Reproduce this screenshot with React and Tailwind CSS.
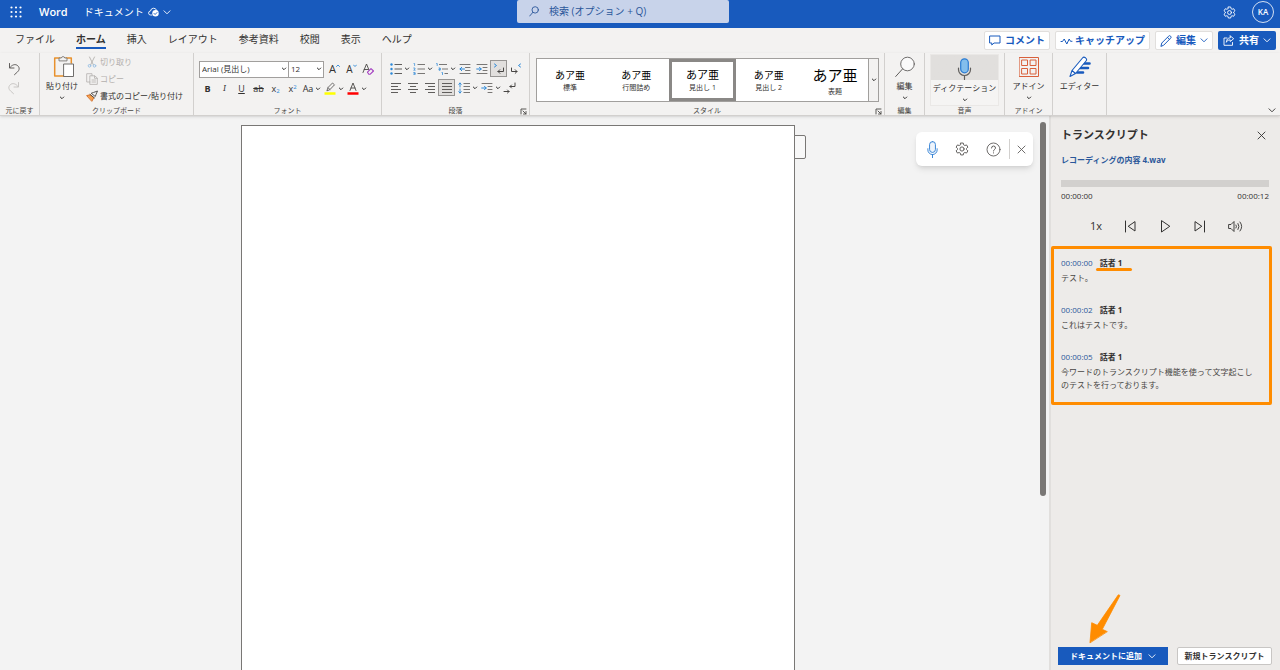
import React from "react";
import clsx from "clsx";

const tabs = ["ファイル", "ホーム", "挿入", "レイアウト", "参考資料", "校閲", "表示", "ヘルプ"];

const styles = [
  { name: "標準", size: "text-[10px] leading-4" },
  { name: "行間詰め", size: "text-[10px] leading-4" },
  { name: "見出し 1", size: "text-[11px] leading-4", selected: true },
  { name: "見出し 2", size: "text-[10px] leading-4" },
  { name: "表題", size: "text-[15px] leading-6" },
];

const entries = [
  { time: "00:00:00", speaker: "話者 1", text: "テスト。", marked: true },
  { time: "00:00:02", speaker: "話者 1", text: "これはテストです。" },
  {
    time: "00:00:05",
    speaker: "話者 1",
    text: "今ワードのトランスクリプト機能を使って文字起こしのテストを行っております。",
  },
];

const Svg = ({ w = 12, h = w, box = `0 0 ${w} ${h}`, children, className }) => (
  <svg
    width={w}
    height={h}
    viewBox={box}
    fill="none"
    stroke="currentColor"
    strokeLinecap="round"
    strokeLinejoin="round"
    className={clsx("shrink-0", className)}
    aria-hidden="true"
  >
    {children}
  </svg>
);

const Chevron = ({ className }) => (
  <Svg w={6} h={4} className={className}>
    <path d="M1.3 1L3 2.7 4.7 1" strokeWidth="1" />
  </Svg>
);

const WideChevron = ({ className }) => (
  <Svg w={8} h={5} className={className}>
    <path d="M1 .8L4 3.8 7 .8" strokeWidth=".9" />
  </Svg>
);

const Mic = ({ w, h, fill = "none", body = "#2b7cd3", stand = body }) => (
  <Svg w={w} h={h} box="0 0 14 22">
    <path d="M1 10v1.5a6 6 0 0012 0V10M7 17.5V21.5" stroke={stand} strokeWidth="1.2" />
    <rect x="3.2" y=".8" width="7.6" height="14" rx="3.8" fill={fill} stroke={body} strokeWidth="1.2" />
  </Svg>
);

const Gear = ({ size }) => (
  <Svg w={size} box="0 0 20 20">
    <path
      d="M8.2 1.5h3.6l.6 2.6 1.6.9 2.5-.8 1.9 3.2-2 1.8v1.6l2 1.8-1.9 3.2-2.5-.8-1.6.9-.6 2.6H8.2l-.6-2.6-1.6-.9-2.5.8-1.9-3.2 2-1.8V9.2l-2-1.8 1.9-3.2 2.5.8 1.6-.9z"
      strokeWidth="1.4"
    />
    <circle cx="10" cy="10" r="3" strokeWidth="1.4" />
  </Svg>
);

const Close = ({ size = 9 }) => (
  <Svg w={size} box="0 0 9 9">
    <path d="M1 1l7 7M8 1L1 8" strokeWidth=".9" />
  </Svg>
);

const Pencil = () => (
  <Svg w={12}>
    <path d="M1 11l.8-3L8.6 1.2a1.3 1.3 0 012 0 1.3 1.3 0 010 2L3.9 10zM7.5 2.4l2 2" strokeWidth="1" />
  </Svg>
);

const Lines = ({ rows }) => (
  <Svg w={12}>
    {rows.map(([x1, x2], i) => (
      <path key={i} d={`M${x1} ${1.5 + i * 3}H${x2}`} stroke="#605e5c" strokeLinecap="butt" />
    ))}
  </Svg>
);

const Launcher = () => (
  <button aria-label="オプションを表示" className="absolute right-0.5 bottom-0 text-[#484644]">
    <Svg w={7}>
      <path d="M1 6V1h5M3 3l3 3M6 3.5V6H3.5" strokeWidth=".9" />
    </Svg>
  </button>
);

const Group = ({ label, launcher, className, children }) => (
  <section className={clsx("relative flex shrink-0 flex-col border-r border-[#d2d0ce]", className)}>
    <div className="flex flex-1">{children}</div>
    <span className="h-2 text-center text-[7px] leading-2 text-[#484644]">{label}</span>
    {launcher && <Launcher />}
  </section>
);

const Tool = ({ label, menu, on, wide, children }) => (
  <button aria-label={label} className="flex items-center">
    <span
      className={clsx(
        "flex h-[17px] items-center justify-center",
        wide ? "w-3.5" : "w-[17px]",
        on && "border border-[#979593] bg-[#e1dfdd]"
      )}
    >
      {children}
    </span>
    {menu && <Chevron />}
  </button>
);

const BigButton = ({ label, menu, children, className }) => (
  <button className={clsx("flex flex-col items-center", className)}>
    <span className="flex h-[27px] w-full items-center justify-center">{children}</span>
    <span className="h-3 leading-3 whitespace-nowrap">{label}</span>
    {menu && <Chevron className="mt-1" />}
  </button>
);

const TitleBar = () => (
  <header className="flex h-7 shrink-0 items-center bg-[#185abd] text-white">
    <div className="flex flex-1 items-center pb-1">
      <button aria-label="アプリ起動ツール" className="ml-2.5">
        <svg width="12" height="12" viewBox="0 0 12 12" fill="currentColor">
          {[1.5, 6, 10.5].map((y) => [1.5, 6, 10.5].map((x) => <circle key={`${x}-${y}`} cx={x} cy={y} r="1.1" />))}
        </svg>
      </button>
      <span className="ml-[17px] text-[11px] font-semibold">Word</span>
      <span className="ml-4 text-[10px]">ドキュメント</span>
      <Svg w={11} h={10} className="ml-1">
        <path d="M4 8H2.7a2 2 0 01-.2-4 3.2 3.2 0 016.2-.6" strokeWidth=".9" />
        <circle cx="7.5" cy="6.3" r="3.2" fill="white" stroke="none" />
        <path d="M6 6.4l1.1 1.1L9 5.5" stroke="#185abd" strokeWidth=".9" />
      </Svg>
      <WideChevron className="ml-1" />
    </div>
    <label className="mr-7 flex h-[23px] w-[212px] items-center self-start rounded-xs bg-[#c8d3ea] pl-3 text-[#2b579a]">
      <Svg w={10} h={11}>
        <circle cx="6.2" cy="3.9" r="3.2" strokeWidth=".9" />
        <path d="M3.9 6.3L.7 10" strokeWidth=".9" />
      </Svg>
      <input
        aria-label="検索"
        placeholder="検索 (オプション + Q)"
        className="ml-2.5 w-40 bg-transparent text-[10px] outline-none placeholder:text-[#2b579a]"
      />
    </label>
    <div className="flex flex-1 items-center justify-end gap-4 pr-1.5 pb-1">
      <button aria-label="設定">
        <Gear size={13} />
      </button>
      <button className="flex size-[22px] items-center justify-center rounded-full border border-white/80 text-[8px] font-semibold">
        KA
      </button>
    </div>
  </header>
);

const pill = "flex h-[19px] items-center rounded-xs border border-[#e1dfdd] bg-white px-1 font-bold text-[#185abd]";

const TabRow = () => (
  <nav className="flex h-[25px] shrink-0 items-start justify-between pr-1 text-[10px]">
    <div className="flex items-start gap-[21px] pl-[15px]">
      {tabs.map((tab) => (
        <button
          key={tab}
          className={clsx(
            "h-[21px] border-b-2 pt-1",
            tab === "ホーム" ? "border-[#185abd] font-bold" : "border-transparent"
          )}
        >
          {tab}
        </button>
      ))}
    </div>
    <div className="flex gap-[5px] pt-[3px]">
      <button className={pill}>
        <Svg w={12} h={11} className="mr-1">
          <path d="M1 1h10v7H5L2.8 10V8H1z" strokeWidth="1" />
        </Svg>
        コメント
      </button>
      <button className={pill}>
        <Svg w={13} h={10} className="mr-0.5">
          <path d="M1 5.5h1.5L4.2 3l2.6 5 2.4-5 1.3 2.3H12" strokeWidth="1" />
        </Svg>
        キャッチアップ
      </button>
      <button className={clsx(pill, "gap-1")}>
        <Pencil />
        編集
        <WideChevron />
      </button>
      <button className="flex h-[19px] items-center gap-1 rounded-xs bg-[#185abd] px-[5px] font-bold text-white">
        <Svg w={12} h={11}>
          <path d="M4 3H1v7.3h8.5V7.5" strokeWidth=".9" />
          <path d="M7.2.9l3.5 2.8-3.5 2.8V4.9C5.2 4.9 4 5.7 3.3 7.3c.1-2.7 1.5-4.4 3.9-4.6z" strokeWidth=".9" />
        </Svg>
        共有
        <WideChevron />
      </button>
    </div>
  </nav>
);

const Ribbon = () => (
  <div className="relative z-10 flex h-[63px] shrink-0 border-b border-[#d2d0ce] text-[8px] shadow-sm">
    <Group label="元に戻す" className="w-10">
      <div className="flex flex-col gap-0.5 pt-[7px] pl-[5px]">
        <Tool label="元に戻す">
          <Svg w={12} h={14}>
            <path d="M1.5 1.5V6H6M1.7 5.8C4 2.5 7.5 1.7 9.7 3.7s1.7 4.5-.2 6.2L6.5 12.7" stroke="#605e5c" />
          </Svg>
        </Tool>
        <Tool label="やり直し">
          <Svg w={12} h={14}>
            <path d="M10.5 1.5V6H6M10.3 5.8C8 2.5 4.5 1.7 2.3 3.7s-1.7 4.5.2 6.2L5.5 12.7" stroke="#c8c6c4" />
          </Svg>
        </Tool>
      </div>
    </Group>

    <Group label="クリップボード" className="w-[154px]">
      <BigButton label="貼り付け" menu className="ml-1.5">
        <Svg w={22} h={24} className="ml-1">
          <path d="M7 3H1.7v18h9M13 3h5.3v5" stroke="#e8912d" strokeWidth="1.5" />
          <path d="M6 5.5V3h2.3a1.8 1.8 0 013.5 0H14v2.5z" fill="#f3f2f1" stroke="#797775" strokeWidth=".9" />
          <path d="M11 9h9.500v12.5H11z" fill="white" stroke="#605e5c" strokeWidth=".9" />
        </Svg>
      </BigButton>
      <div className="ml-2 flex flex-col gap-[5px] pt-[3px] whitespace-nowrap">
        <button className="flex h-3 items-center gap-0.5 text-[#b3b0ad]">
          <Svg w={12}>
            <path d="M3.5 1l4 8M8.5 1l-4 8" strokeWidth=".9" />
            <circle cx="3.5" cy="9.8" r="1.3" stroke="#9cc3e6" />
            <circle cx="8.5" cy="9.8" r="1.3" stroke="#9cc3e6" />
          </Svg>
          切り取り
        </button>
        <button className="flex h-3 items-center gap-0.5 text-[#b3b0ad]">
          <Svg w={12}>
            <path d="M4 9H.7V.7H6v1.8M4.2 2.8h4.5L11.3 5v6.4H4.2zM8.5 3v2.3H11M6 7h3.5M6 9h3.5" strokeWidth=".8" />
          </Svg>
          コピー
        </button>
        <button className="flex h-3 items-center gap-0.5">
          <Svg w={12}>
            <path d="M1 5.5l3.5-.8 3.3 3L6 11z" fill="#f7a04b" stroke="#d2691e" strokeWidth=".9" />
            <path d="M4 4.5L8.5 8M5.500 3.500l3.800 3 .7-2L11.500 1 8 2.300z" stroke="#484644" strokeWidth=".9" />
          </Svg>
          書式のコピー/貼り付け
        </button>
      </div>
    </Group>

    <Group label="フォント" className="w-[188px]">
      <div className="flex flex-col gap-0.5 pt-[7px] pl-[5px]">
        <div className="flex h-[18px] items-center">
          <div className="relative">
            <select
              aria-label="フォント名"
              className="block h-[17px] w-[90px] appearance-none border border-[#a19f9d] bg-white pl-0.5"
            >
              <option>Arial (見出し)</option>
            </select>
            <Chevron className="pointer-events-none absolute top-1.5 right-0.5" />
          </div>
          <div className="relative mr-0.5">
            <select
              aria-label="フォント サイズ"
              className="block h-[17px] w-[35px] appearance-none border border-l-0 border-[#a19f9d] bg-white pl-0.5"
            >
              <option>12</option>
            </select>
            <Chevron className="pointer-events-none absolute top-1.5 right-0.5" />
          </div>
          <Tool label="フォント サイズの拡大">
            <span className="text-[11px]">A</span>
            <Svg w={4} h={10}>
              <path d="M.5 2.5L2 1l1.5 1.5" stroke="#2b88d8" strokeWidth=".9" />
            </Svg>
          </Tool>
          <Tool label="フォント サイズの縮小">
            <span className="text-[10px]">A</span>
            <Svg w={4} h={10}>
              <path d="M.5 1L2 2.5 3.5 1" stroke="#2b88d8" strokeWidth=".9" />
            </Svg>
          </Tool>
          <Tool label="書式のクリア">
            <Svg w={13}>
              <path d="M1 9.5L4.5 1 7 7M2.2 6.5h4" stroke="#484644" strokeWidth=".9" />
              <path d="M5.5 9.2L9 5.7 11.5 8 8 11.3H6.8z" fill="#f3f2f1" stroke="#a33ec0" strokeWidth="1.1" />
            </Svg>
          </Tool>
        </div>
        <div className="flex items-center text-[9px]">
          <Tool label="太字"><b>B</b></Tool>
          <Tool label="斜体"><i className="font-serif">I</i></Tool>
          <Tool label="下線"><u>U</u></Tool>
          <Tool label="取り消し線"><s>ab</s></Tool>
          <Tool label="下付き">
            <span>x<sub className="text-[6px] text-[#2b88d8]">2</sub></span>
          </Tool>
          <Tool label="上付き">
            <span>x<sup className="text-[6px] text-[#2b88d8]">2</sup></span>
          </Tool>
          <Tool label="文字種の変換" menu wide>Aa</Tool>
          <Tool label="蛍光ペンの色" menu>
            <Svg w={12} h={13}>
              <path d="M3 8.5l1-3L8.5 1l2 1.8L6 7.5zM4 5.7l2 1.8" stroke="#605e5c" strokeWidth=".9" />
              <path d="M.5 11.5h11" stroke="#ffff00" strokeWidth="2.5" strokeLinecap="butt" />
            </Svg>
          </Tool>
          <Tool label="フォントの色" menu>
            <Svg w={12} h={13}>
              <path d="M3 8.5L6 1l3 7.5M4 6h4" stroke="#484644" strokeWidth=".9" />
              <path d="M.5 11.5h11" stroke="#ff0000" strokeWidth="2.5" strokeLinecap="butt" />
            </Svg>
          </Tool>
        </div>
      </div>
    </Group>

    <Group label="段落" launcher className="w-[148px]">
      <div className="flex flex-col gap-0.5 pt-[7px] pl-[5px]">
        <div className="flex">
          <Tool label="箇条書き" menu>
            <Svg w={12}>
              {[1.5, 6, 10.5].map((y) => (
                <g key={y}>
                  <circle cx="1.5" cy={y} r="1.2" fill="#2b88d8" stroke="none" />
                  <path d={`M4.5 ${y}H12`} stroke="#605e5c" strokeLinecap="butt" />
                </g>
              ))}
            </Svg>
          </Tool>
          <Tool label="段落番号" menu>
            <Svg w={12}>
              {[1.5, 6, 10.5].map((y) => (
                <path key={y} d={`M4.5 ${y}H12`} stroke="#797775" strokeLinecap="butt" />
              ))}
              <path d="M1 .5h.6v2M.7 5H2v1L.7 7.2h1.500M.7 9.5h1.400v2.200H.7M1 10.6h1" stroke="#2b88d8" strokeWidth=".7" />
            </Svg>
          </Tool>
          <Tool label="アウトライン" menu>
            <Svg w={12}>
              <path d="M3 1.5h8M6 6h6M8.5 10.5H12" stroke="#797775" strokeLinecap="butt" />
              <path d="M.7.5h.5v2M3 5h1.2v2.2H3V6h1.2M6 9.5h.5v2" stroke="#2b88d8" strokeWidth=".8" />
            </Svg>
          </Tool>
          <Tool label="インデントを減らす">
            <Svg w={12}>
              <path d="M1 1.5h10M6.5 4.5H11M6.5 7.5H11M1 10.5h10" stroke="#797775" />
              <path d="M5.5 6H1M2.7 4.3L1 6l1.7 1.7" stroke="#2b88d8" />
            </Svg>
          </Tool>
          <Tool label="インデントを増やす">
            <Svg w={12}>
              <path d="M1 1.5h10M7 4.5h4M7 7.5h4M1 10.5h10" stroke="#797775" />
              <path d="M.7 6h4.5M3.5 4.3L5.2 6 3.5 7.7" stroke="#2b88d8" />
            </Svg>
          </Tool>
          <Tool label="左から右" on>
            <Svg w={12}>
              <path d="M1.5 1l2 1.5-2 1.5" stroke="#2b88d8" />
              <path d="M10.5 5v3.5H5M6.8 6.7L5 8.5l1.8 1.8" stroke="#484644" />
            </Svg>
          </Tool>
          <Tool label="右から左">
            <Svg w={12}>
              <path d="M10.5 1l-2 1.5 2 1.5" stroke="#2b88d8" />
              <path d="M1.5 5v3.5H7M5.2 6.7L7 8.5l-1.8 1.8" stroke="#484644" />
            </Svg>
          </Tool>
        </div>
        <div className="flex">
          <Tool label="左揃え"><Lines rows={[[1, 11], [1, 8], [1, 11], [1, 8]]} /></Tool>
          <Tool label="中央揃え"><Lines rows={[[1, 11], [3, 9], [1, 11], [3, 9]]} /></Tool>
          <Tool label="右揃え"><Lines rows={[[1, 11], [4, 11], [1, 11], [4, 11]]} /></Tool>
          <Tool label="両端揃え" on><Lines rows={[[1, 11], [1, 11], [1, 11], [1, 11]]} /></Tool>
          <Tool label="行間" menu>
            <Svg w={12}>
              <path d="M2 1v4M2 7v4M.7 2.3L2 1l1.3 1.3M.7 9.7L2 11l1.3-1.3" stroke="#2b88d8" strokeWidth=".9" />
              {[1.5, 4.5, 7.5, 10.5].map((y) => (
                <path key={y} d={`M5.5 ${y}H12`} stroke="#797775" strokeLinecap="butt" />
              ))}
            </Svg>
          </Tool>
          <Tool label="段落の間隔" menu>
            <Svg w={12}>
              <path d="M1 1.5h10M7 4.5h4M7 7.5h4M7 10.5h4" stroke="#797775" />
              <path d="M.7 6h4.5M3.5 4.3L5.2 6 3.5 7.7" stroke="#2b88d8" />
            </Svg>
          </Tool>
          <Tool label="編集記号の表示">
            <Svg w={13} h={12}>
              <path d="M12 1v3.5H7M8.5 3L7 4.5 8.5 6M1 9.5h5M4.5 8L6 9.5 4.5 11" stroke="#484644" />
            </Svg>
          </Tool>
        </div>
      </div>
    </Group>

    <Group label="スタイル" launcher className="w-[355px]">
      <div className="mt-[5px] ml-1.5 flex h-11 w-[343px] border border-[#a19f9d] bg-white">
        {styles.map((style) => (
          <button
            key={style.name}
            className={clsx(
              "flex flex-1 flex-col items-center justify-center border-3",
              style.selected ? "border-[#8a8886]" : "border-transparent"
            )}
          >
            <span className={clsx("text-black", style.size)}>あア亜</span>
            <span className="text-[7px] leading-2.5">{style.name}</span>
          </button>
        ))}
        <button
          aria-label="その他のスタイル"
          className="flex w-2.5 items-center justify-center border-l border-[#a19f9d] bg-[#f3f2f1]"
        >
          <Chevron />
        </button>
      </div>
    </Group>

    <Group label="編集" className="w-10">
      <BigButton label="編集" menu className="w-full">
        <Svg w={20} h={22} className="text-[#605e5c]">
          <circle cx="12.5" cy="8" r="6.8" fill="#fafafa" strokeWidth=".9" />
          <path d="M7.5 13L.7 20.5" />
        </Svg>
      </BigButton>
    </Group>

    <Group label="音声" className="w-20">
      <div className="mx-[5px] my-px flex-1 border border-[#eae8e6] bg-linear-to-b from-[#e1dfdd] from-50% to-[#f5f4f3] to-50%">
        <BigButton label="ディクテーション" menu className="w-full">
          <Mic w={15} h={22} fill="#83beec" stand="#605e5c" />
        </BigButton>
      </div>
    </Group>

    <Group label="アドイン" className="w-12">
      <BigButton label="アドイン" menu className="w-full">
        <Svg w={20} className="text-[#d9603b]">
          <path d="M.5.5h19v19H.5zM3 3h5.5v5.5H3zM11.5 3H17v5.5h-5.5zM3 11.5h5.5V17H3zM11.5 11.5H17V17h-5.5z" />
        </Svg>
      </BigButton>
    </Group>

    <Group className="w-[54px]">
      <BigButton label="エディター" className="w-full">
        <Svg w={22} className="text-[#185abd]">
          <path d="M14 7.5h6.500M11 12h8M8 16.500h6" strokeWidth="2.6" />
          <path
            d="M1 20.5l2-6L13.5 2a2 2 0 012.8-.3l.5.5a2 2 0 01.2 2.8L6.5 17.5zM3 14.500l3.500 3"
            fill="white"
            strokeWidth="1.1"
          />
        </Svg>
      </BigButton>
    </Group>

    <button aria-label="リボンを折りたたむ" className="mt-auto mr-1 mb-0.5 ml-auto">
      <WideChevron />
    </button>
  </div>
);

const DictationBar = () => (
  <div className="absolute top-4 right-4 flex h-[34px] items-center rounded-md bg-white px-[7px] text-[#605e5c] shadow-md">
    <div className="flex items-center gap-[17px] pr-2 pl-1">
      <button aria-label="ディクテーション">
        <Mic w={11} h={17} fill="#eef4fb" />
      </button>
      <button aria-label="設定">
        <Gear size={14} />
      </button>
      <button aria-label="ヘルプ">
        <Svg w={15}>
          <circle cx="7.5" cy="7.5" r="6.5" strokeWidth=".9" />
          <path d="M5.5 6a2 2 0 114 0c0 1.3-2 1.500-2 3M7.500 10.800v.2" />
        </Svg>
      </button>
    </div>
    <button aria-label="閉じる" className="flex h-5 items-center border-l border-[#d2d0ce] pl-[7px]">
      <Close />
    </button>
  </div>
);

const Canvas = () => (
  <main className="relative flex-1 bg-[#f3f3f3] pt-[9px] pr-3.5">
    <div className="relative mx-auto h-full w-[554px] border border-b-0 border-[#797775] bg-white">
      <div className="absolute top-[9px] -right-3 h-6 w-3 rounded-r-xs border border-[#797775] bg-[#f8f8f8]" />
    </div>
    <DictationBar />
    <div className="absolute top-1.5 right-[3px] h-[374px] w-1.5 rounded-full bg-[#797775]" />
  </main>
);

const Transcript = () => (
  <aside className="flex w-[231px] shrink-0 flex-col border-l-2 border-[#e1dfdd] bg-[#edebe9] text-[8px]">
    <div className="flex items-center justify-between pt-[11px] pr-3.5 pl-2.5">
      <h2 className="text-[11px] leading-4 font-bold">トランスクリプト</h2>
      <button aria-label="閉じる">
        <Close />
      </button>
    </div>
    <div className="flex flex-col pr-[11px] pl-2.5">
      <a href="#" className="mt-[11px] leading-3 font-bold text-[#2b579a]">
        レコーディングの内容 4.wav
      </a>
      <input
        type="range"
        aria-label="再生位置"
        defaultValue="0"
        className="mt-3.5 h-[7px] w-full appearance-none bg-[#d2d0ce] [&::-webkit-slider-thumb]:appearance-none"
      />
      <div className="mt-[3px] flex justify-between leading-3">
        <span>00:00:00</span>
        <span>00:00:12</span>
      </div>
    </div>
    <div className="mt-4 flex h-4 items-center justify-between pr-9 pl-[39px]">
      <button className="text-[11px]">1x</button>
      <button aria-label="巻き戻し">
        <Svg w={13}>
          <path d="M1.5 1v11M11 2v9L4.5 6.5z" />
        </Svg>
      </button>
      <button aria-label="再生">
        <Svg w={11} h={13}>
          <path d="M1.5 1v11L9.5 6.5z" />
        </Svg>
      </button>
      <button aria-label="早送り">
        <Svg w={13}>
          <path d="M11.5 1v11M2 2v9L8.5 6.5z" />
        </Svg>
      </button>
      <button aria-label="音量">
        <Svg w={16} h={13}>
          <path d="M1 4.5h2l3-3v10l-3-3H1z" strokeWidth=".9" />
          <path d="M8 5q1 1.5 0 3M10 3.5q2 3 0 6M12 2q3.5 4.500 0 9" strokeWidth=".9" />
        </Svg>
      </button>
    </div>
    <ul className="mt-3 mr-2 h-[159px] rounded-xs border-3 border-[#ff8c00] pt-[7px] pr-1 pl-[7px]">
      {entries.map((entry) => (
        <li key={entry.time} className="mb-[19px]">
          <div className="flex h-3.5 items-center gap-[7px]">
            <button className="text-[#2b579a]">{entry.time}</button>
            <span className="relative font-bold">
              {entry.speaker}
              {entry.marked && <span className="absolute -right-2.5 -bottom-0.5 -left-1 h-[3px] rounded-full bg-[#ff8c00]" />}
            </span>
          </div>
          <p className="mt-px mr-2 leading-[13px] text-[#484644]">{entry.text}</p>
        </li>
      ))}
    </ul>
    <div className="relative mt-auto flex gap-[9px] pr-2 pb-[5px] pl-[7px] font-bold">
      <Svg w={32} h={50} className="absolute bottom-[26px] left-[38px]">
        <path
          d="M1 48.5L2.7 28.7 8.3 31.3 29.3.8 31 1.4 13.3 35.3 18 37.5z"
          fill="#ff8c00"
          stroke="#ff8c00"
          strokeWidth=".8"
        />
      </Svg>
      <button className="flex h-[18px] w-[110px] items-center justify-center gap-1.5 bg-[#185abd] text-white">
        ドキュメントに追加
        <WideChevron />
      </button>
      <button className="h-[18px] flex-1 rounded-xs border border-[#c8c6c4] bg-white whitespace-nowrap">
        新規トランスクリプト
      </button>
    </div>
  </aside>
);

export default function App() {
  return (
    <div className="flex h-screen flex-col overflow-hidden bg-[#f3f2f1] font-['Open_Sans','Noto_Sans_CJK_JP',sans-serif] text-[#323130]">
      <TitleBar />
      <TabRow />
      <Ribbon />
      <div className="flex min-h-0 flex-1">
        <Canvas />
        <Transcript />
      </div>
    </div>
  );
}
